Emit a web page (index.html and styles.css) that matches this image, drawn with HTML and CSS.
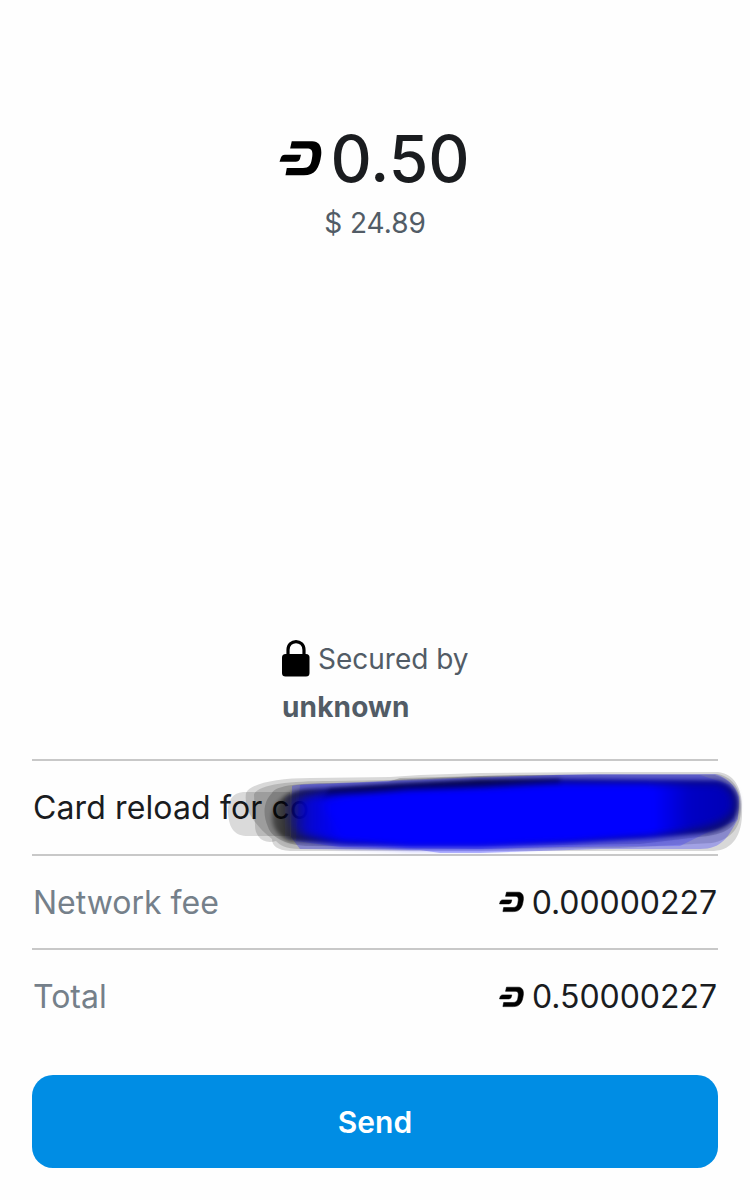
FILE: index.html
```html
<!DOCTYPE html>
<html lang="en">
<head>
    <meta charset="UTF-8">
    <meta name="viewport" content="width=device-width, initial-scale=1.0">
    <title>Confirm payment</title>
    <link rel="stylesheet" href="styles.css">
</head>
<body>

    <!-- Dash logo, reused by every amount -->
    <svg class="symbols" width="0" height="0">
        <symbol id="dash" viewBox="0 0 129 106" overflow="visible">
            <path d="M38 1H100C121 1 130 17 127 43C122 82 108 104 75 104H19L23 82H72C90 82 96 74 99 54C103 32 100 23 84 23H33Z"/>
            <path d="M17 42H66L63 54Q60 63 50 63H1L5 51Q8 42 17 42Z"/>
        </symbol>
    </svg>

    <main class="payment">
        <header class="amount">
            <div class="amount-dash">
                <svg class="logo-big"><use href="#dash"/></svg>
                <span>0.50</span>
            </div>
            <div class="amount-fiat">$ 24.89</div>
        </header>

        <section class="secured">
            <div class="secured-by">
                <svg class="lock" viewBox="0 0 28 37">
                    <path d="M6 16V10C6 -1.2 22 -1.2 22 10V16" fill="none" stroke="#000" stroke-width="3.2"/>
                    <rect x="0" y="14" width="27.5" height="22.5" rx="3.5"/>
                </svg>
                <span>Secured by</span>
            </div>
            <strong class="secured-name">unknown</strong>
        </section>

        <section class="details">
            <div class="row memo">
                <span>Card reload for co</span>
                <!-- Marker scribble hiding the rest of the memo -->
                <svg class="scribble" viewBox="220 760 530 100">
                    <defs>
                        <filter id="soft" x="-10%" y="-30%" width="120%" height="160%">
                            <feGaussianBlur stdDeviation="2"/>
                        </filter>
                        <filter id="softer" x="-10%" y="-30%" width="120%" height="160%">
                            <feGaussianBlur stdDeviation="4"/>
                        </filter>
                        <linearGradient id="shade" gradientUnits="userSpaceOnUse" x1="268" y1="0" x2="330" y2="0">
                            <stop offset="0" stop-color="#000" stop-opacity=".35"/>
                            <stop offset="0.4" stop-color="#000010" stop-opacity=".7"/>
                            <stop offset="1" stop-color="#000060" stop-opacity=".85"/>
                        </linearGradient>
                        <linearGradient id="ink" gradientUnits="userSpaceOnUse" x1="285" y1="0" x2="735" y2="0">
                            <stop offset="0" stop-color="#00f" stop-opacity="0"/>
                            <stop offset="0.05" stop-color="#00f" stop-opacity=".7"/>
                            <stop offset="0.13" stop-color="#00f"/>
                            <stop offset="0.82" stop-color="#00f"/>
                            <stop offset="0.9" stop-color="#0000c4"/>
                            <stop offset="1" stop-color="#0000b4"/>
                        </linearGradient>
                    </defs>
                    <!-- outer translucent strokes -->
                    <g fill="#000">
                        <path opacity=".14" d="M243 791C232 792 227 801 228 812C229 828 235 835 248 835H290V791Z"/>
                        <path opacity=".15" d="M246 792C250 783 275 777 310 777L390 776L420 774L480 772L600 771H718C734 773 742 786 742 808C743 832 734 849 714 850H620L480 850L290 850C277 849 272 845 272 838C260 828 243 812 246 792Z"/>
                        <path opacity=".15" d="M254 793C260 783 290 780 330 780L390 779L480 775L600 773H718C734 777 741 788 741 808C741 826 732 838 712 842L620 847L480 848H300C285 848 280 844 276 840C262 844 255 834 255 825Z"/>
                        <path opacity=".18" d="M272 792C276 784 300 782 340 782L388 781L400 777L520 774H715C732 779 739 789 739 806C739 822 730 832 708 835L640 843L480 845H310C290 845 272 838 268 826C262 812 264 800 272 792Z"/>
                    </g>
                    <g fill="#22f">
                        <path opacity=".3" d="M292 785C300 782 340 783 400 779L480 776L590 773H715C726 776 736 784 739 796L738 818C728 836 722 848 700 848L600 848L480 852H440L420 849L300 848L291 836Z"/>
                        <path opacity=".25" d="M300 784L400 780L560 774H700L730 784L735 820L706 832L680 845L560 846L480 848L340 846L296 840Z"/>
                    </g>
                    <!-- dark rim and the solid blue core -->
                    <path filter="url(#soft)" fill="url(#shade)" d="M276 804C284 794 292 789 310 788L400 783L480 779L560 778L718 780C733 784 739 793 738 805C737 818 729 828 706 832L640 837L560 841L480 843H350L290 840C272 834 268 816 276 804Z"/>
                    <path filter="url(#soft)" fill="#000020" opacity=".6" d="M330 788L400 783L480 779L560 778V788L480 790L400 794L320 800Z"/>
                    <path filter="url(#softer)" fill="url(#ink)" d="M288 798C310 792 360 793 405 789L480 787L560 782H718C732 787 736 797 733 810C722 826 690 830 650 836L560 841L480 845H405L340 842L300 834C284 824 284 808 288 798Z"/>
                    <path filter="url(#softer)" fill="#00f" d="M325 803L410 793L540 788H650L652 827L570 838L480 843H410L340 832Z"/>
                </svg>
            </div>
            <div class="row">
                <span class="label">Network fee</span>
                <span class="value"><svg class="logo-small"><use href="#dash"/></svg>0.00000227</span>
            </div>
            <div class="row">
                <span class="label">Total</span>
                <span class="value"><svg class="logo-small"><use href="#dash"/></svg>0.50000227</span>
            </div>
        </section>

        <button class="send">Send</button>
    </main>

</body>
</html>
```
FILE: styles.css
```css
* {
    box-sizing: border-box;
}

body {
    margin: 0;
    background: #fefefe;
    color: #1a1c1f;
    font-family: "Inter", sans-serif;
}

.symbols {
    display: block;
}

.payment {
    height: 1200px;
    padding: 118px 32px 0;
    display: flex;
    flex-direction: column;
    overflow: hidden;
}

/* Amount at the top */
.amount {
    height: 518px;
    text-align: center;
}

.amount-dash {
    display: flex;
    justify-content: center;
    align-items: center;
    gap: 8px;
    height: 80px;
    font-size: 64px;
    font-weight: 500;
    padding-right: 1px;
}

.logo-big {
    width: 43px;
    height: 35px;
}

.amount-fiat {
    margin-top: 7px;
    line-height: 36px;
    font-size: 28px;
    color: #525c66;
}

/* Lock and certificate name */
.secured {
    align-self: center;
    width: 186px;
    height: 123px;
    color: #525c66;
    font-size: 28px;
}

.secured-by {
    display: flex;
    align-items: center;
    gap: 8px;
    height: 46px;
    white-space: nowrap;
}

.lock {
    flex: none;
    width: 28px;
    height: 37px;
    margin-bottom: 2px;
}

.secured-name {
    display: block;
    line-height: 51px;
    font-weight: 700;
    letter-spacing: 0.15px;
}

/* Detail rows */
.row {
    position: relative;
    display: flex;
    justify-content: space-between;
    align-items: center;
    height: 94.7px;
    padding-left: 1px;
    border-top: 2px solid #c8c8c8;
    font-size: 32px;
}

.memo {
    letter-spacing: 0.12px;
}

.label {
    color: #75808a;
}

.value {
    display: flex;
    align-items: center;
    gap: 8px;
    margin-right: 1px;
    letter-spacing: -0.05px;
}

.logo-small {
    width: 25px;
    height: 20px;
    overflow: visible;
    stroke: #000;
    stroke-width: 3px;
}

.scribble {
    position: absolute;
    left: 188px;
    top: 0;
    width: 530px;
    height: 100px;
    z-index: 1;
}

.send {
    margin-top: 32px;
    height: 93px;
    flex: none;
    border: none;
    border-radius: 21px;
    background: #008de4;
    color: #fff;
    font: 600 30px "Inter", sans-serif;
}
```
